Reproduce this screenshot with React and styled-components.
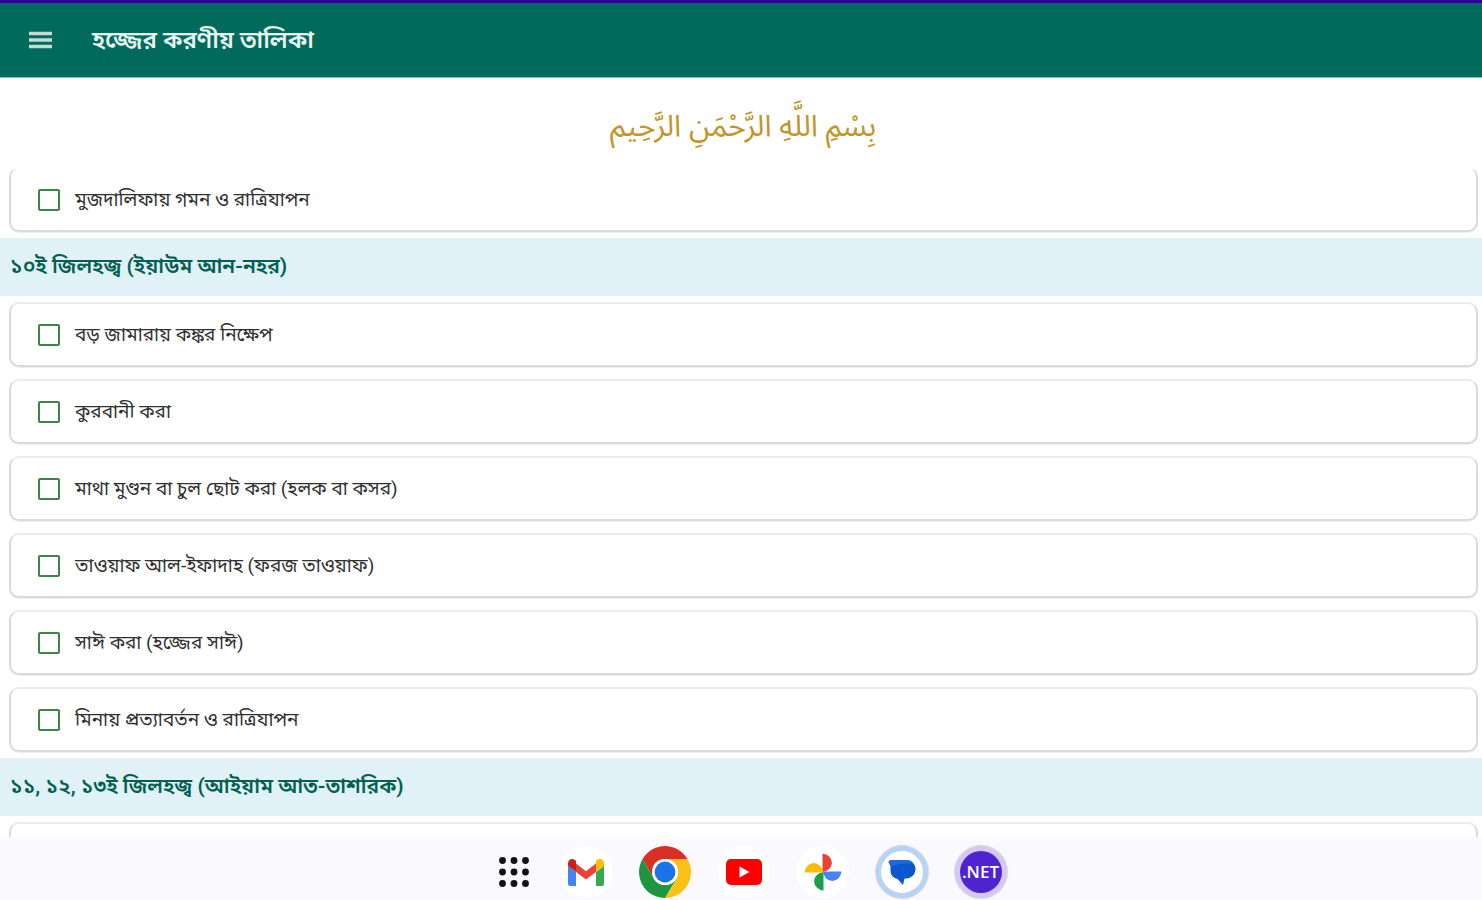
import React from "react";
import styled, { createGlobalStyle } from "styled-components";

const GlobalStyle = createGlobalStyle`
  * { box-sizing: border-box; }
  body {
    margin: 0;
    background: #fff;
    font-family: Roboto, "Noto Sans Bengali", "Noto Sans", sans-serif;
  }
`;

const Screen = styled.div`
  display: flex;
  flex-direction: column;
  height: 100vh;
  overflow: hidden;
`;

const AppBar = styled.header`
  display: flex;
  align-items: center;
  flex: none;
  gap: 40px;
  height: 77px;
  padding: 0 28px;
  border-top: 3px solid #25078f;
  background: #006a5b;
  box-shadow: 0 1px 1px rgba(0, 0, 0, 0.3);
`;

const MenuButton = styled.button`
  display: flex;
  padding: 0;
  border: 0;
  background: none;
  color: #c6dbd3;
`;

const Title = styled.h1`
  margin: 0;
  color: #e8f6f2;
  font-size: 24px;
  line-height: 32px;
  font-weight: 600;
`;

const Bismillah = styled.p`
  display: flex;
  flex: none;
  align-items: center;
  justify-content: center;
  height: 92px;
  margin: 0;
  padding: 8px 0 0 4px;
  color: #c4952a;
  font-family: "Noto Sans Arabic", "DejaVu Sans", sans-serif;
  font-size: 30px;
  line-height: 48px;
`;

const Scroller = styled.main`
  flex: 1;
  min-height: 0;
  overflow: hidden auto;
  scrollbar-width: none;
`;

const Sections = styled.div`
  margin-top: -8px;
`;

const SectionTitle = styled.h2`
  height: 58px;
  margin: 0;
  padding: 12px 10px;
  background: #e0f1f8;
  color: #00604f;
  font-size: 21px;
  line-height: 32px;
  font-weight: 600;
`;

const Tasks = styled.ul`
  display: grid;
  gap: 12px;
  margin: 0;
  padding: 6px 4px 6px 9px;
  list-style: none;
`;

const Task = styled.li`
  height: 65px;
  border: 2px solid #dadada;
  border-top-color: #ebebeb;
  border-radius: 10px;
  background: #fff;
  box-shadow: 0 1px 0 #eeeeee;
`;

const TaskLabel = styled.label`
  display: flex;
  align-items: center;
  gap: 15px;
  height: 100%;
  padding: 0 27px;
  color: #303030;
  font-size: 19px;
  line-height: 28px;
`;

const TickBox = styled.input`
  appearance: none;
  flex: none;
  width: 22px;
  height: 22px;
  margin: 0;
  border: 2px solid #3d8546;
  border-radius: 2px;
  background: #fff;
  &:checked { background: #3d8546; }
`;

const Dock = styled.nav`
  display: flex;
  flex: none;
  align-items: center;
  justify-content: center;
  gap: 27px;
  height: 63px;
  padding: 7px 0 0 19px;
  background: #f9f9fe;
`;

const DockButton = styled.button`
  display: flex;
  flex: none;
  align-items: center;
  justify-content: center;
  width: ${(p) => p.$width || 52}px;
  height: 52px;
  padding: 0;
  border: ${(p) => (p.$ring ? `5px solid ${p.$ring}` : "0")};
  border-radius: 50%;
  background: ${(p) => p.$fill || "#fff"};
  box-shadow: ${(p) => (p.$ring ? "0 0 1px 1px #d5d8e0" : "none")};
`;

const NetMark = styled.span`
  display: flex;
  flex: none;
  align-items: center;
  justify-content: center;
  width: 42px;
  height: 42px;
  border-radius: 50%;
  background: #4f24d0;
  color: #fff;
  font: 600 17px/20px "Open Sans", sans-serif;
`;

const MenuIcon = () => (
  <svg width="24" height="24" viewBox="0 0 24 24" aria-hidden="true">
    <path d="M1 5.5h23M1 12h23M1 18.5h23" stroke="currentColor" strokeWidth="3.6" />
  </svg>
);

const AppsIcon = () => (
  <svg width="32" height="32" viewBox="0 0 32 32" aria-hidden="true">
    {[4.5, 16, 27.5].map((y) =>
      [4.5, 16, 27.5].map((x) => <circle key={`${x}-${y}`} cx={x} cy={y} r="3.4" fill="#111" />)
    )}
  </svg>
);

const GmailIcon = () => (
  <svg width="36" height="27" viewBox="0 0 36 27" aria-hidden="true">
    <path d="M0 7l8 6v14H2.500Q0 27 0 24.500z" fill="#4285f4" />
    <path d="M28 13l8-6v17.500Q36 27 33.500 27H28z" fill="#34a853" />
    <path d="M8 4.500l10 7.800L28 4.500V13l-10 7.500L8 13z" fill="#ea4335" />
    <path d="M0 4.500C0 .7 3.800-1.300 7 1l1 .8V13L0 7z" fill="#c5221f" />
    <path d="M36 4.500C36 .7 32.200-1.300 29 1l-1 .8V13l8-6z" fill="#fbbc04" />
  </svg>
);

const ChromeIcon = () => (
  <svg width="52" height="52" viewBox="0 0 52 52" aria-hidden="true">
    <path d="M3.500 13A26 26 0 0 1 48.500 13H26A13 13 0 0 0 14.700 19.500L14.700 32.500z" fill="#d93025" />
    <path d="M48.500 13A26 26 0 0 1 26 52L37.300 32.500A13 13 0 0 0 37.300 19.500A13 13 0 0 0 26 13z" fill="#fbc116" />
    <path d="M3.500 13A26 26 0 0 0 26 52L37.300 32.500A13 13 0 0 1 14.700 32.500z" fill="#1e9641" />
    <circle cx="26" cy="26" r="13" fill="#fff" />
    <circle cx="26" cy="26" r="10.400" fill="#1a73e8" />
  </svg>
);

const YoutubeIcon = () => (
  <svg width="36" height="26" viewBox="0 0 36 26" aria-hidden="true">
    <rect width="36" height="26" rx="5" fill="#f00" />
    <path d="M13.500 7.500v11L23.500 13z" fill="#fff" />
  </svg>
);

const PhotosIcon = () => (
  <svg width="38" height="38" viewBox="0 0 38 38" aria-hidden="true">
    <path d="M18.500 .5a10.500 9.300 0 0 1 0 18.500z" fill="#ea4335" />
    <path d="M37.500 18.500a9.300 10.500 0 0 1-18.500 0z" fill="#4285f4" />
    <path d="M19.500 37.500a10.500 9.300 0 0 1 0-18.500z" fill="#1e9e49" />
    <path d="M.5 19.500a9.300 10.500 0 0 1 18.500 0z" fill="#fbbc04" />
  </svg>
);

const MessagesIcon = () => (
  <svg width="28" height="28" viewBox="0 0 28 28" aria-hidden="true">
    <path d="M4 2h14c5.500 0 9.500 4 9.500 9s-4 9.500-9.500 9.500h-1.500L15 27l-5.500-6C5 20 2.500 16.500 2.500 12.500V8L1 5C0 3.500 1.500 2 4 2z" fill="#0b57d0" />
    <path d="M4 2h14c3 0 5.500 1.200 7.300 3.300C18 5.500 9 5.500 2.500 9V8L1 5C0 3.500 1.500 2 4 2z" fill="#2468d8" />
  </svg>
);

const sections = [
  { tasks: ["মুজদালিফায় গমন ও রাত্রিযাপন"] },
  {
    title: "১০ই জিলহজ্ব (ইয়াউম আন-নহর)",
    tasks: [
      "বড় জামারায় কঙ্কর নিক্ষেপ",
      "কুরবানী করা",
      "মাথা মুণ্ডন বা চুল ছোট করা (হলক বা কসর)",
      "তাওয়াফ আল-ইফাদাহ (ফরজ তাওয়াফ)",
      "সাঈ করা (হজ্জের সাঈ)",
      "মিনায় প্রত্যাবর্তন ও রাত্রিযাপন",
    ],
  },
  { title: "১১, ১২, ১৩ই জিলহজ্ব (আইয়াম আত-তাশরিক)", tasks: [""] },
];

export default function App() {
  return (
    <Screen lang="bn">
      <GlobalStyle />
      <AppBar>
        <MenuButton aria-label="Menu"><MenuIcon /></MenuButton>
        <Title>হজ্জের করণীয় তালিকা</Title>
      </AppBar>
      <Bismillah lang="ar" dir="rtl">بِسْمِ اللَّهِ الرَّحْمَنِ الرَّحِيم</Bismillah>
      <Scroller>
        <Sections>
          {sections.map((section, s) => (
            <section key={s}>
              {section.title && <SectionTitle>{section.title}</SectionTitle>}
              <Tasks>
                {section.tasks.map((task, t) => (
                  <Task key={t}>
                    <TaskLabel>
                      <TickBox type="checkbox" />
                      {task}
                    </TaskLabel>
                  </Task>
                ))}
              </Tasks>
            </section>
          ))}
        </Sections>
      </Scroller>
      <Dock aria-label="Dock">
        <DockButton $width={38} $fill="transparent" aria-label="Apps"><AppsIcon /></DockButton>
        <DockButton aria-label="Gmail"><GmailIcon /></DockButton>
        <DockButton aria-label="Chrome"><ChromeIcon /></DockButton>
        <DockButton aria-label="YouTube"><YoutubeIcon /></DockButton>
        <DockButton aria-label="Photos"><PhotosIcon /></DockButton>
        <DockButton $ring="#b8d3f5" aria-label="Messages"><MessagesIcon /></DockButton>
        <DockButton $ring="#d5c8f3" $fill="#d5c8f3"><NetMark>.NET</NetMark></DockButton>
      </Dock>
    </Screen>
  );
}
